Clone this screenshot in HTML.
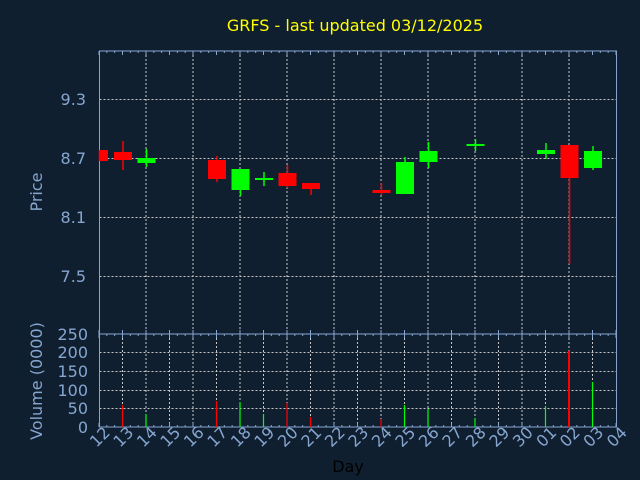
<!DOCTYPE html>
<html><head><meta charset="utf-8"><style>
html,body{margin:0;padding:0;background:#101f30;}
svg{display:block;font-family:"DejaVu Sans","Liberation Sans",sans-serif;}
</style></head><body>
<svg id="s" width="640" height="480" viewBox="0 0 640 480" xmlns="http://www.w3.org/2000/svg">
<rect width="640" height="480" fill="#101f30"/>
<text x="355" y="31" fill="#ffff00" font-size="16" text-anchor="middle">GRFS - last updated 03/12/2025</text>
<g id="grid" stroke="#c8c8c8" stroke-width="1" stroke-dasharray="2,2"></g>
<g id="ax" stroke="#86a6d0" stroke-width="1" fill="none"></g>
<g id="c"></g>
<g fill="#86a6d0" font-size="16" text-anchor="end">
<text x="86" y="105">9.3</text><text x="86" y="164">8.7</text><text x="86" y="223">8.1</text><text x="86" y="282">7.5</text>
<text x="88" y="340">250</text><text x="88" y="358">200</text><text x="88" y="377">150</text><text x="88" y="396">100</text><text x="88" y="414">50</text><text x="88" y="433">0</text>
</g>
<text transform="translate(42,192) rotate(-90)" fill="#86a6d0" font-size="16" text-anchor="middle">Price</text>
<text transform="translate(42,381) rotate(-90)" fill="#86a6d0" font-size="16" text-anchor="middle">Volume (0000)</text>
<text x="348" y="472" fill="#000" font-size="16" text-anchor="middle">Day</text>
<g id="lb" fill="#86a6d0" font-size="16"></g>
</svg>
<script>
var NS="http://www.w3.org/2000/svg",L=99.5,R=616.5,T=51,PB=334,VB=427,d=23.5;
function el(p,t,a,txt){var e=document.createElementNS(NS,t);for(var k in a)e.setAttribute(k,a[k]);if(txt)e.textContent=txt;document.getElementById(p).appendChild(e);return e;}
function X(i){return L+d*i;}
[99.5,158.5,217.5,276.5].forEach(function(y){el("grid","line",{x1:L,x2:R,y1:y,y2:y});});
[352.5,371.5,390.5,408.5].forEach(function(y){el("grid","line",{x1:L,x2:R,y1:y,y2:y});});
for(var i=2;i<22;i+=2)el("grid","line",{x1:X(i)-.5,x2:X(i)-.5,y1:T,y2:PB});
for(var i=1;i<22;i++)el("grid","line",{x1:X(i)-.5,x2:X(i)-.5,y1:PB,y2:VB});
el("ax","rect",{x:L,y:T,width:R-L,height:VB-T});
el("ax","line",{x1:L,x2:R,y1:PB,y2:PB});
for(var i=0;i<=22;i++){var x=X(i)-.5;el("ax","line",{x1:x,x2:x,y1:T,y2:T+4});el("ax","line",{x1:x,x2:x,y1:PB,y2:PB+4});el("ax","line",{x1:x,x2:x,y1:VB,y2:VB-4});el("ax","line",{x1:x,x2:x,y1:PB,y2:PB-4});
 if(i<22){for(var k=1;k<3;k++){var xx=x+k*d/3;el("ax","line",{x1:xx,x2:xx,y1:T,y2:T+2});el("ax","line",{x1:xx,x2:xx,y1:VB,y2:VB-2});el("ax","line",{x1:xx,x2:xx,y1:PB,y2:PB+2});}}}
var days=["12","13","14","15","16","17","18","19","20","21","22","23","24","25","26","27","28","29","30","01","02","03","04"];
days.forEach(function(t,i){el("lb","text",{transform:"translate("+(X(i)-3)+",448) rotate(-45)"},t);});
var G="#00ff00",Rd="#ff0000";
var C=[[0,Rd,150,161,150,161],[1,Rd,152,160,141,170],[2,G,158,163,149,167],[5,Rd,160,179,156,182],[6,G,169,190,169,196],[7,G,178,180,172,186],[8,Rd,173,186,165,188],[9,Rd,183,189,183,195],[12,Rd,190,193,183,195],[13,G,162,194,157,194],[14,G,151,162,142,168],[16,G,144,146,139,151],[19,G,150,154,143,159],[20,Rd,145,178,145,264],[21,G,151,168,146,170]];
C.forEach(function(c){var x=X(c[0]);el("c","line",{x1:x,x2:x,y1:c[4],y2:c[5],stroke:c[1],"stroke-width":1.5});
 var x0=c[0]==0?L+.5:x-9,w=c[0]==0?8:18;el("c","rect",{x:x0,y:c[2],width:w,height:Math.max(c[3]-c[2],2),fill:c[1]});});
var V=[[1,Rd,405],[2,G,414],[5,Rd,401],[6,G,402],[7,G,414],[8,Rd,403],[9,Rd,417],[12,Rd,419],[13,G,405],[14,G,409],[16,G,418],[19,G,406],[20,Rd,351],[21,G,382]];
V.forEach(function(v){var x=X(v[0])-.5;el("c","line",{x1:x,x2:x,y1:v[2],y2:VB,stroke:v[1],"stroke-width":v[0]==20?2:1.2});});
</script>
</body></html>
